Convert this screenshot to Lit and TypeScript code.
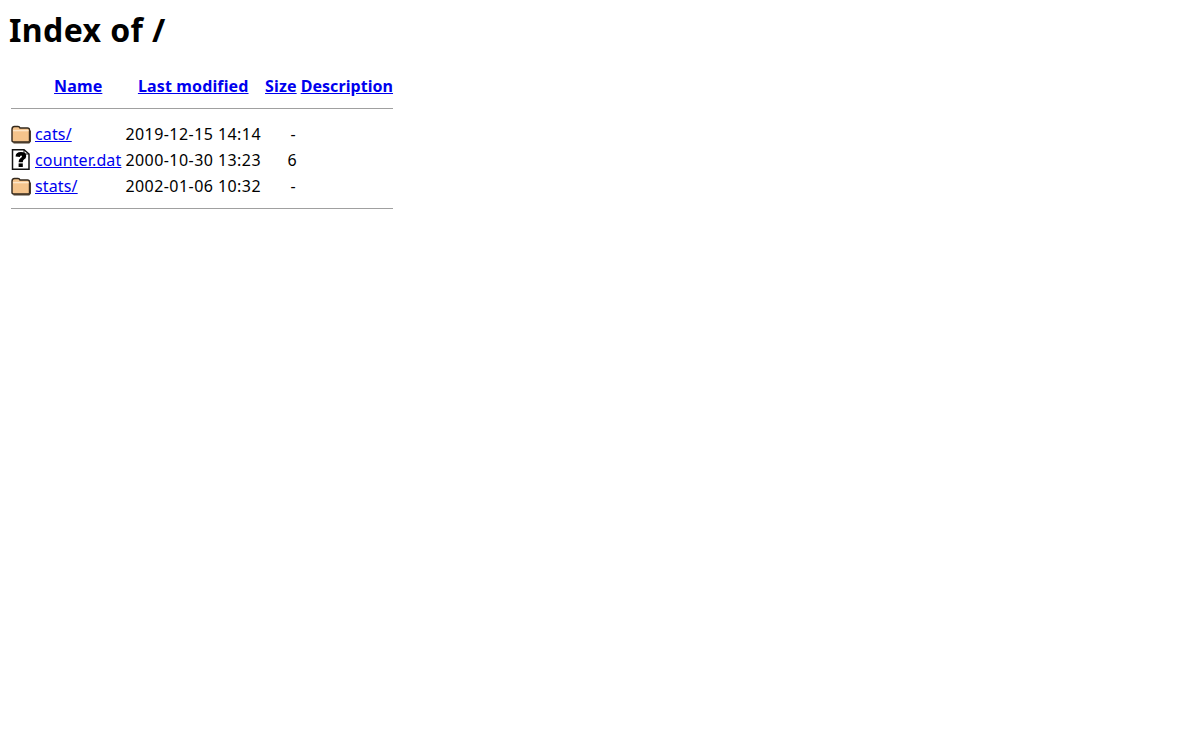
import { LitElement, html, css } from "lit";
import { customElement } from "lit/decorators.js";

const folder = html`<svg class="icon" width="20" height="22" viewBox="0 1 20 22">
  <path d="M1 7.5 Q1 4.5 3.5 4.5 L7 4.5 Q8.5 4.5 9 6 L16.5 6 Q18.5 6 18.5 8 L18.5 19 Q18.5 20 17.5 20 L2.5 20 Q1 20 1 18.5 Z" fill="#f5c48c" stroke="#33281c" stroke-width="1.4"/>
  <path d="M2 8.6 L17.6 8.6" stroke="#fde6c8" stroke-width="1.4"/>
  <path d="M2.5 20.8 L18 20.8 L19.5 19 L19.5 8.5" fill="none" stroke="#4a3c2c" stroke-width="1.4"/>
</svg>`;

const unknown = html`<svg class="icon" width="20" height="22" viewBox="0 1 20 22">
  <path d="M1.5 1.8 L13 1.8 L18 6 L18 21.3 L1.5 21.3 Z" fill="#fff" stroke="#111" stroke-width="1.5"/>
  <path d="M13 1.8 L13 6 L18 6" fill="none" stroke="#111" stroke-width="1"/>
  <path d="M4.6 8.6 Q4.6 4 10 4 Q15.2 4 15.2 8.2 Q15.2 10.4 13 11.6 Q11.8 12.3 11.8 14.2 L7.6 14.2 Q7.6 11.4 9.4 10.2 Q11 9.2 11 8.2 Q11 7.4 10 7.4 Q9 7.4 8.9 9 Z" fill="#000"/>
  <rect x="7.6" y="15.4" width="4.2" height="3.6" fill="#000"/>
</svg>`;

const rows = [
  { icon: folder, name: "cats/", date: "2019-12-15 14:14", size: "-" },
  { icon: unknown, name: "counter.dat", date: "2000-10-30 13:23", size: "6" },
  { icon: folder, name: "stats/", date: "2002-01-06 10:32", size: "-" },
];

@customElement("app-root")
export class AppRoot extends LitElement {
  static styles = css`
    :host {
      display: block;
      font-family: "Noto Sans", "Open Sans", sans-serif;
      font-size: 16px;
      line-height: 22px;
      color: #000;
      background: #fff;
      padding: 9px 8px 8px;
      min-height: 723px;
    }
    .title {
      font-size: 32px;
      line-height: 42px;
      font-weight: 700;
      letter-spacing: 0.4px;
      margin: 0 0 21px;
      padding-left: 1px;
    }
    table { border-spacing: 2px; border-collapse: separate; }
    th, td { padding: 1px; vertical-align: top; }
    th { font-weight: 700; text-align: center; }
    a { color: #0000ee; text-decoration: underline; letter-spacing: 0.14px; }
    .desc { letter-spacing: 0.06px; }
    .date { letter-spacing: 0.44px; }
    .size { text-align: right; }
    .dash { padding-right: 2px; }
    .icon { display: block; }
    .rule { padding: 0; }
    hr {
      border: 0;
      height: 1px;
      background: #a0a0a0;
      margin: 8px 1px 11px;
    }
  `;

  render() {
    return html`
      <h1 class="title">Index of /</h1>
      <table>
        <tr>
          <th></th>
          <th><a href="#">Name</a></th>
          <th><a href="#">Last modified</a></th>
          <th><a href="#">Size</a></th>
          <th><a class="desc" href="#">Description</a></th>
        </tr>
        <tr><td class="rule" colspan="5"><hr /></td></tr>
        ${rows.map(
          (r) => html`<tr>
            <td>${r.icon}</td>
            <td><a href="#">${r.name}</a></td>
            <td class="date">${r.date}</td>
            <td class="size ${r.size === "-" ? "dash" : ""}">${r.size}</td>
            <td></td>
          </tr>`
        )}
        <tr><td class="rule" colspan="5"><hr /></td></tr>
      </table>
    `;
  }
}
